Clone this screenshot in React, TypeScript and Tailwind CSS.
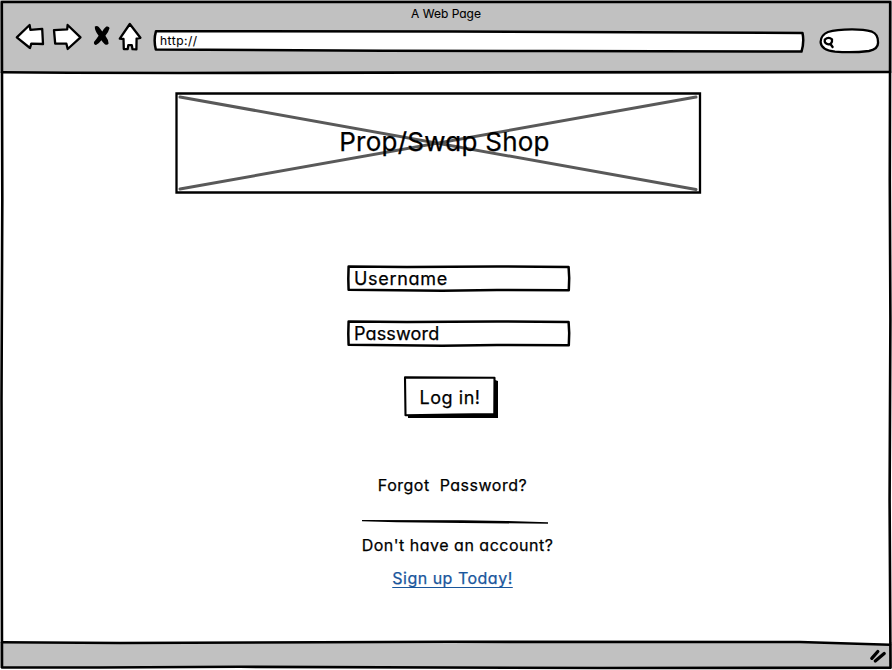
import type { ReactNode } from "react";

const line = { fill: "none", stroke: "#000", strokeLinejoin: "round", strokeLinecap: "round" } as const;

function Sketch({ w, h, children }: { w: number; h: number; children: ReactNode }) {
  return (
    <svg className="pointer-events-none absolute left-0 top-0 overflow-visible" width={w} height={h} viewBox={`0 0 ${w} ${h}`} aria-hidden="true">
      {children}
    </svg>
  );
}

function NavIcons() {
  return (
    <svg className="block" width="128" height="30" viewBox="15 22 128 30" aria-hidden="true">
      <g {...line} fill="#fff" strokeWidth="2.3">
        <path d="M16.8 37.4 29.6 25 30.4 29.8 42.2 28.8 43 44 31.3 43.6 30 48 Z" />
        <path d="M54 30.2 67.2 29.4 67.6 25 80.5 37.3 67.7 49 66.4 43.7 55.2 43.6 Z" />
        <path d="M129.8 24 140.4 37.8 136.6 38.6 136.4 49.4 132.5 49.2 131.8 45.2 128.3 45.2 127.7 49.2 123.8 49 123.5 39 119.8 38.6 Z" />
      </g>
      <path d="M94.8 26.5Q97 25.3 98.8 27Q100.8 29.5 102.3 31.5Q104 28.5 106.3 26.6Q108.8 25.8 109.6 28Q108.6 32 105.4 35.8Q108.3 39.5 108.6 43.5Q107.2 45.6 104.8 44.2Q102.8 42.5 101.4 40.2Q98.8 43.8 96 45Q93.5 44.6 94 42Q96.5 39 98.6 35.8Q94.6 30.5 94.8 26.5Z" />
    </svg>
  );
}

function Field({ label, tracking }: { label: string; tracking: string }) {
  return (
    <div className="relative flex h-[27px] w-[224px] items-center pl-[7px]">
      <Sketch w={224} h={27}>
        <path d="M1.6 1.6 L60 2.1 150 1.5 221.6 2 222.2 13 221.8 25.2 150 24.9 95 25.7 50 25.3 1.6 24.7 1.3 14 Z" {...line} strokeWidth="2.5" />
      </Sketch>
      <span className={`relative text-[18px] leading-[26px] ${tracking}`}>{label}</span>
    </div>
  );
}

export default function App() {
  return (
    <div className="relative flex h-[670px] w-[892px] flex-col overflow-hidden bg-white font-['Inter','Noto_Sans',sans-serif] text-black [-webkit-text-stroke:0.25px_currentColor] [font-feature-settings:'cv11','ss03']">
      <header className="relative flex h-[73px] flex-col bg-[#c1c1c1]">
        <div className="flex h-[22px] items-center justify-center pt-[5px] text-[12px] leading-[16px] [-webkit-text-stroke:0.1px_currentColor]">A Web Page</div>
        <div className="flex items-start pl-[15px]">
          <NavIcons />
          <div className="relative ml-[10px] mt-[7px] flex h-[24px] w-[652px] items-center pl-[7px]">
            <Sketch w={652} h={24}>
              <path d="M3 2.2 L300 2.5 480 3.3 649.5 4 Q651.4 13 648.5 22.6 L400 22 230 21.8 2.8 20.4 Q.4 11 3 2.2 Z" {...line} fill="#fff" strokeWidth="2.5" />
            </Sketch>
            <span className="relative text-[12px] leading-[16px] tracking-[0.5px] [-webkit-text-stroke:0.1px_currentColor]">http://</span>
          </div>
          <svg className="ml-[14px] mt-[6px] block" width="61" height="26" viewBox="819 28 61 26" aria-hidden="true">
            <path d="M828 32 Q836 29.7 852 29.4 Q864 29.4 872 31.7 Q878 34 878 42 Q878.7 49 869 51 Q852 53 835 51.6 Q821 50 820.6 42 Q820.8 35 828 32Z" {...line} fill="#fff" strokeWidth="2.3" />
            <path d="M824.8 39.7 Q828.5 36.3 832 39.3 Q832.5 44 828.5 44.3 Q824 43.5 824.8 39.7ZM830.4 44 832.6 47" {...line} strokeWidth="2.3" />
          </svg>
        </div>
      </header>

      <main className="flex flex-1 flex-col items-start">
        <div className="relative ml-[175px] mt-[19px] flex h-[102px] w-[527px] items-center justify-center pb-[2px] pl-[12px]">
          <Sketch w={527} h={102}>
            <path d="M5 5 521 97.5M5 97 521 5" {...line} stroke="#595959" strokeWidth="3" />
            <path d="M1.5 1.5H525V100.5H1.5Z" {...line} strokeLinejoin="miter" strokeWidth="2.3" />
          </Sketch>
          <h1 className="relative whitespace-nowrap text-[26px] leading-[32px] tracking-[0.25px]">Prop/Swap Shop</h1>
        </div>

        <div className="ml-[347px] mt-[71px] flex flex-col gap-[28px]">
          <Field label="Username" tracking="tracking-[0.7px]" />
          <Field label="Password" tracking="tracking-[0.15px]" />
        </div>

        <button type="button" className="relative ml-[403px] mt-[29px] flex h-[43px] w-[96px] items-center justify-center pr-[2px] text-[18px] leading-[24px]">
          <Sketch w={96} h={43}>
            <path d="M5 39 92 38V4L95 5V42H5Z" fill="#000" />
            <path d="M2 1.4 91.5 1.8 91.3 38 50 38.6 2.5 39.2Z" {...line} fill="#fff" strokeWidth="2.1" />
          </Sketch>
          <span className="relative whitespace-nowrap tracking-[0.55px]">Log in!</span>
        </button>

        <div className="ml-[362px] flex w-[191px] flex-col items-center whitespace-nowrap text-[16px] leading-[22px] tracking-[0.5px]">
          <a className="mr-[10px] mt-[55px] whitespace-pre">Forgot  Password?</a>
          <svg className="mr-[5px] mt-[24px] block" width="186" height="6" viewBox="0 0 186 6" aria-hidden="true">
            <path d="M0 0 100 .2 145 .9 186 2.2V3.7L100 3 35 2.3 0 1.2Z" />
          </svg>
          <p className="mt-[8px]">Don't have an account?</p>
          <a className="mr-[10px] mt-[11px] text-[#19569c] underline decoration-1 underline-offset-[3px]">Sign up Today!</a>
        </div>
      </main>

      <footer className="relative mb-[2px] flex h-[26px] items-center justify-end bg-[#c1c1c1]">
        <svg className="mr-[5px] mt-[2px] block" width="18" height="15" viewBox="869 650 18 15" aria-hidden="true">
          <path d="M871.8 659.3 877.8 652.5M875.3 662 884.2 654.6" {...line} strokeWidth="3.3" />
        </svg>
      </footer>

      <Sketch w={892} h={670}>
        <path d="M800 641 890 641V644.8L800 642Z" fill="#fff" />
        <path d="M1.8 2H890.2L889.8 180 890.4 320 889.6 500 890.5 667.8 600 668 240 666.8 100 667.5 2 667.5 1.5 400 2.3 200Z" {...line} strokeWidth="2.6" />
        <path d="M2 72.3 70 72.7 180 73 500 72.4 890 72M2 642.3 120 643 450 641.8 800 642 890 644.8" {...line} strokeWidth="2.6" />
      </Sketch>
    </div>
  );
}
